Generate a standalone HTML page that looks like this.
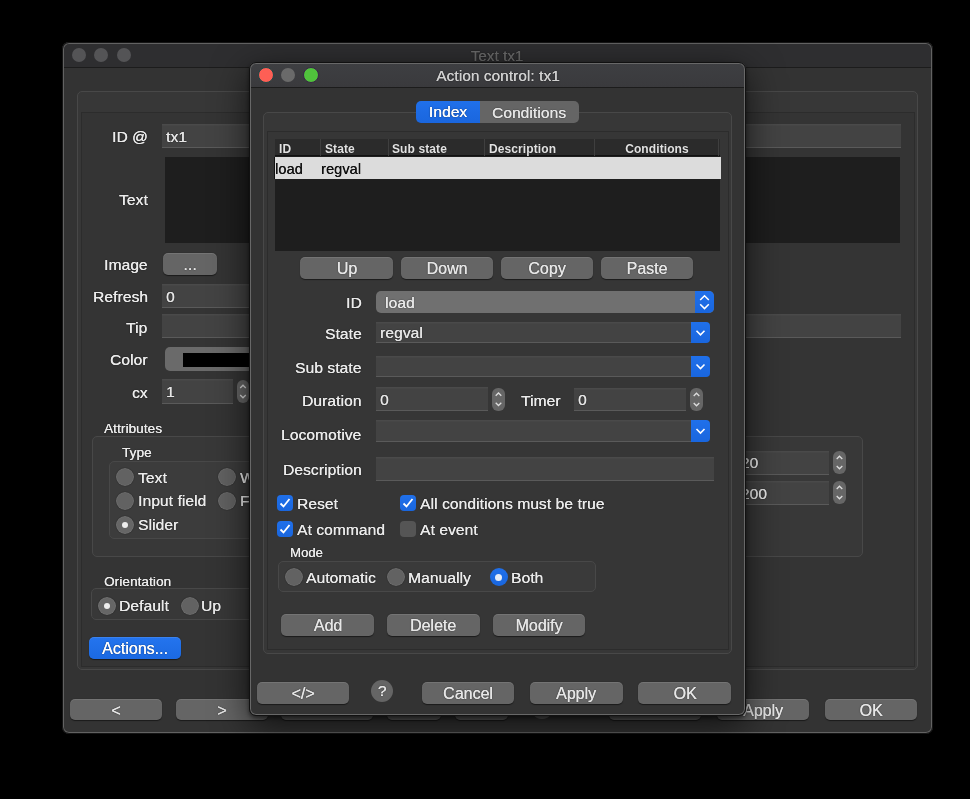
<!DOCTYPE html><html><head><meta charset="utf-8"><style>
html,body{margin:0;padding:0;background:#000;width:970px;height:799px;overflow:hidden}
.a{position:absolute;box-sizing:border-box}
.t{white-space:nowrap;font-family:"Liberation Sans",sans-serif;color:#ebebeb;font-size:15.5px;letter-spacing:0.1px;will-change:transform;text-shadow:0.25px 0 currentColor,0 0 1.2px rgba(0,0,0,.9)}
</style></head><body>
<div class="a " style="left:62px;top:42px;width:871px;height:692px;background:#333;border-radius:7px"></div>
<div class="a " style="left:62px;top:42px;width:871px;height:25.5px;background:#2e2e30;border-radius:7px 7px 0 0;border-bottom:1px solid #1c1c1c"></div>
<div class="a " style="left:71.5px;top:47.7px;width:14.0px;height:14.0px;background:#545456;border-radius:50%"></div>
<div class="a " style="left:94px;top:47.7px;width:14px;height:14.0px;background:#545456;border-radius:50%"></div>
<div class="a " style="left:116.5px;top:47.7px;width:14.0px;height:14.0px;background:#545456;border-radius:50%"></div>
<div class="a t" style="left:346.5px;width:300px;top:45.5px;height:20px;line-height:20px;text-align:center;font-size:15px;color:#6a6a6a">Text tx1</div>
<div class="a " style="left:76.5px;top:90.8px;width:841.5px;height:579.7px;border:1px solid #484848;border-radius:5px;background:rgba(255,255,255,0.025);box-sizing:border-box;"></div>
<div class="a " style="left:80.5px;top:111.5px;width:834.0px;height:555.0px;border:1px solid #2c2c2c;background:#343434"></div>
<div class="a t" style="right:822.5px;top:126.5px;height:20px;line-height:20px;text-align:right;">ID @</div>
<div class="a " style="left:162px;top:124px;width:739px;height:24px;background:#434343;border-bottom:1.5px solid #5a5a5a;box-shadow:inset 0 1.5px 0 #4a4a4a;box-sizing:border-box;"></div>
<div class="a t" style="left:166px;top:126.5px;height:20px;line-height:20px;font-size:15.5px;color:#e6e6e6">tx1</div>
<div class="a t" style="right:822.5px;top:189.5px;height:20px;line-height:20px;text-align:right;">Text</div>
<div class="a " style="left:164.5px;top:156.5px;width:735.0px;height:86.0px;background:#1e1e1e"></div>
<div class="a t" style="right:822.5px;top:254.5px;height:20px;line-height:20px;text-align:right;">Image</div>
<div class="a " style="left:163px;top:253px;width:54px;height:21.5px;background:#656565;border-radius:5px;box-shadow:0 0.5px 1px rgba(0,0,0,.5),inset 0 1px 0 rgba(255,255,255,.1);"></div>
<div class="a t" style="left:40.0px;width:300px;top:254.75px;height:20px;line-height:20px;text-align:center;font-size:16px;letter-spacing:0;color:#e6e6e6">...</div>
<div class="a t" style="right:822.5px;top:286.5px;height:20px;line-height:20px;text-align:right;">Refresh</div>
<div class="a " style="left:162px;top:284px;width:578px;height:24px;background:#434343;border-bottom:1.5px solid #5a5a5a;box-shadow:inset 0 1.5px 0 #4a4a4a;box-sizing:border-box;"></div>
<div class="a t" style="left:166px;top:286.5px;height:20px;line-height:20px;font-size:15.5px;color:#e6e6e6">0</div>
<div class="a t" style="right:822.5px;top:317.5px;height:20px;line-height:20px;text-align:right;">Tip</div>
<div class="a " style="left:162px;top:314px;width:739px;height:24px;background:#434343;border-bottom:1.5px solid #5a5a5a;box-shadow:inset 0 1.5px 0 #4a4a4a;box-sizing:border-box;"></div>
<div class="a t" style="right:822.5px;top:349.5px;height:20px;line-height:20px;text-align:right;">Color</div>
<div class="a " style="left:165px;top:347px;width:575px;height:23.5px;background:#6a6a6a;border-radius:5px"></div>
<div class="a " style="left:183px;top:352.5px;width:557px;height:14.0px;background:#000"></div>
<div class="a t" style="right:822.5px;top:382.5px;height:20px;line-height:20px;text-align:right;">cx</div>
<div class="a " style="left:162px;top:379px;width:71px;height:25px;background:#434343;border-bottom:1.5px solid #5a5a5a;box-shadow:inset 0 1.5px 0 #4a4a4a;box-sizing:border-box;"></div>
<div class="a t" style="left:166px;top:382.0px;height:20px;line-height:20px;font-size:15.5px;color:#e6e6e6">1</div>
<div class="a " style="left:237px;top:380px;width:12px;height:23px;background:#666;border-radius:6px"><svg width="12" height="23" style="position:absolute;left:0;top:0"><path d="M3.2,8.0 l2.8,-2.8 l2.8,2.8 M3.2,15.0 l2.8,2.8 l2.8,-2.8" stroke="#ddd" stroke-width="1.3" fill="none"/></svg></div>
<div class="a t" style="left:103.5px;top:418.5px;height:20px;line-height:20px;font-size:13.5px">Attributes</div>
<div class="a " style="left:91.5px;top:435.5px;width:771.0px;height:121.5px;border:1px solid #484848;border-radius:5px;background:rgba(255,255,255,0.025);box-sizing:border-box;"></div>
<div class="a t" style="left:122px;top:443.0px;height:20px;line-height:20px;font-size:13.5px">Type</div>
<div class="a " style="left:109px;top:460.5px;width:591px;height:78.5px;border:1px solid #484848;border-radius:5px;background:rgba(255,255,255,0.025);box-sizing:border-box;"></div>
<div class="a " style="left:115.8px;top:468.0px;width:18.000000000000014px;height:18.0px;background:#626262;border-radius:50%;box-shadow:inset 0 0 0 1px rgba(255,255,255,.07),0 0 1px rgba(0,0,0,.8)"></div>
<div class="a t" style="left:138px;top:467.5px;height:20px;line-height:20px;">Text</div>
<div class="a " style="left:115.8px;top:491.5px;width:18.000000000000014px;height:18.0px;background:#626262;border-radius:50%;box-shadow:inset 0 0 0 1px rgba(255,255,255,.07),0 0 1px rgba(0,0,0,.8)"></div>
<div class="a t" style="left:138px;top:491.0px;height:20px;line-height:20px;">Input field</div>
<div class="a " style="left:115.8px;top:515.5px;width:18.000000000000014px;height:18.0px;background:#666;border-radius:50%;box-shadow:inset 0 0 0 1px rgba(255,255,255,.07),0 0 1px rgba(0,0,0,.8)"><div class="a" style="left:6.0px;top:6.0px;width:6px;height:6px;border-radius:50%;background:#eee"></div></div>
<div class="a t" style="left:138px;top:515.0px;height:20px;line-height:20px;">Slider</div>
<div class="a " style="left:218.0px;top:468.0px;width:18.0px;height:18.0px;background:#626262;border-radius:50%;box-shadow:inset 0 0 0 1px rgba(255,255,255,.07),0 0 1px rgba(0,0,0,.8)"></div>
<div class="a t" style="left:239.5px;top:467.5px;height:20px;line-height:20px;">Wrap</div>
<div class="a " style="left:218.0px;top:491.5px;width:18.0px;height:18.0px;background:#626262;border-radius:50%;box-shadow:inset 0 0 0 1px rgba(255,255,255,.07),0 0 1px rgba(0,0,0,.8)"></div>
<div class="a t" style="left:239.5px;top:491.0px;height:20px;line-height:20px;">Fast</div>
<div class="a " style="left:700px;top:450.5px;width:129px;height:24.0px;background:#434343;border-bottom:1.5px solid #5a5a5a;box-shadow:inset 0 1.5px 0 #4a4a4a;box-sizing:border-box;"></div>
<div class="a t" style="left:732px;top:453.0px;height:20px;line-height:20px;">120</div>
<div class="a " style="left:833px;top:451px;width:13px;height:23px;background:#666;border-radius:6px"><svg width="13" height="23" style="position:absolute;left:0;top:0"><path d="M3.7,8.0 l2.8,-2.8 l2.8,2.8 M3.7,15.0 l2.8,2.8 l2.8,-2.8" stroke="#ddd" stroke-width="1.3" fill="none"/></svg></div>
<div class="a " style="left:700px;top:481px;width:129px;height:24px;background:#434343;border-bottom:1.5px solid #5a5a5a;box-shadow:inset 0 1.5px 0 #4a4a4a;box-sizing:border-box;"></div>
<div class="a t" style="left:732px;top:483.5px;height:20px;line-height:20px;">1200</div>
<div class="a " style="left:833px;top:481px;width:13px;height:23px;background:#666;border-radius:6px"><svg width="13" height="23" style="position:absolute;left:0;top:0"><path d="M3.7,8.0 l2.8,-2.8 l2.8,2.8 M3.7,15.0 l2.8,2.8 l2.8,-2.8" stroke="#ddd" stroke-width="1.3" fill="none"/></svg></div>
<div class="a t" style="left:103.5px;top:571.5px;height:20px;line-height:20px;font-size:13.5px">Orientation</div>
<div class="a " style="left:91px;top:588px;width:609px;height:32px;border:1px solid #484848;border-radius:5px;background:rgba(255,255,255,0.025);box-sizing:border-box;"></div>
<div class="a " style="left:97.8px;top:596.5px;width:18.0px;height:18.0px;background:#666;border-radius:50%;box-shadow:inset 0 0 0 1px rgba(255,255,255,.07),0 0 1px rgba(0,0,0,.8)"><div class="a" style="left:6.0px;top:6.0px;width:6px;height:6px;border-radius:50%;background:#eee"></div></div>
<div class="a t" style="left:119px;top:596.0px;height:20px;line-height:20px;">Default</div>
<div class="a " style="left:181.0px;top:596.5px;width:18.0px;height:18.0px;background:#626262;border-radius:50%;box-shadow:inset 0 0 0 1px rgba(255,255,255,.07),0 0 1px rgba(0,0,0,.8)"></div>
<div class="a t" style="left:201.3px;top:596.0px;height:20px;line-height:20px;">Up</div>
<div class="a " style="left:89px;top:637px;width:92px;height:21.5px;background:linear-gradient(#2474ee,#1b69e2);border-radius:5px;box-shadow:0 0.5px 1px rgba(0,0,0,.5),inset 0 1px 0 rgba(255,255,255,.1);"></div>
<div class="a t" style="left:-15.0px;width:300px;top:638.75px;height:20px;line-height:20px;text-align:center;font-size:16px;letter-spacing:0;color:#fff">Actions...</div>
<div class="a " style="left:70px;top:699px;width:92px;height:21px;background:#656565;border-radius:5px;box-shadow:0 0.5px 1px rgba(0,0,0,.5),inset 0 1px 0 rgba(255,255,255,.1);"></div>
<div class="a t" style="left:-34.0px;width:300px;top:700.5px;height:20px;line-height:20px;text-align:center;font-size:16px;letter-spacing:0;color:#e6e6e6">&lt;</div>
<div class="a " style="left:175.5px;top:699px;width:92.5px;height:21px;background:#656565;border-radius:5px;box-shadow:0 0.5px 1px rgba(0,0,0,.5),inset 0 1px 0 rgba(255,255,255,.1);"></div>
<div class="a t" style="left:71.75px;width:300px;top:700.5px;height:20px;line-height:20px;text-align:center;font-size:16px;letter-spacing:0;color:#e6e6e6">&gt;</div>
<div class="a " style="left:281px;top:699px;width:92px;height:21px;background:#656565;border-radius:5px;box-shadow:0 0.5px 1px rgba(0,0,0,.5),inset 0 1px 0 rgba(255,255,255,.1);"></div>
<div class="a t" style="left:177.0px;width:300px;top:700.5px;height:20px;line-height:20px;text-align:center;font-size:16px;letter-spacing:0;color:#e6e6e6"></div>
<div class="a " style="left:387px;top:699px;width:54px;height:21px;background:#656565;border-radius:5px;box-shadow:0 0.5px 1px rgba(0,0,0,.5),inset 0 1px 0 rgba(255,255,255,.1);"></div>
<div class="a t" style="left:264.0px;width:300px;top:700.5px;height:20px;line-height:20px;text-align:center;font-size:16px;letter-spacing:0;color:#e6e6e6"></div>
<div class="a " style="left:455px;top:699px;width:53px;height:21px;background:#656565;border-radius:5px;box-shadow:0 0.5px 1px rgba(0,0,0,.5),inset 0 1px 0 rgba(255,255,255,.1);"></div>
<div class="a t" style="left:331.5px;width:300px;top:700.5px;height:20px;line-height:20px;text-align:center;font-size:16px;letter-spacing:0;color:#e6e6e6"></div>
<div class="a " style="left:609px;top:699px;width:92px;height:21px;background:#656565;border-radius:5px;box-shadow:0 0.5px 1px rgba(0,0,0,.5),inset 0 1px 0 rgba(255,255,255,.1);"></div>
<div class="a t" style="left:505.0px;width:300px;top:700.5px;height:20px;line-height:20px;text-align:center;font-size:16px;letter-spacing:0;color:#e6e6e6"></div>
<div class="a " style="left:717px;top:699px;width:92px;height:21px;background:#656565;border-radius:5px;box-shadow:0 0.5px 1px rgba(0,0,0,.5),inset 0 1px 0 rgba(255,255,255,.1);"></div>
<div class="a t" style="left:613.0px;width:300px;top:700.5px;height:20px;line-height:20px;text-align:center;font-size:16px;letter-spacing:0;color:#e6e6e6">Apply</div>
<div class="a " style="left:825px;top:699px;width:92px;height:21px;background:#656565;border-radius:5px;box-shadow:0 0.5px 1px rgba(0,0,0,.5),inset 0 1px 0 rgba(255,255,255,.1);"></div>
<div class="a t" style="left:721.0px;width:300px;top:700.5px;height:20px;line-height:20px;text-align:center;font-size:16px;letter-spacing:0;color:#e6e6e6">OK</div>
<div class="a " style="left:530.8px;top:696.6px;width:22.0px;height:22.0px;background:#656565;border-radius:50%"></div>
<div class="a " style="left:62px;top:42px;width:871px;height:692px;border-radius:7px;border:1px solid #151515;box-shadow:inset 0 0 0 1px #626262"></div>
<div class="a " style="left:249px;top:62px;width:497px;height:654px;background:#333;border-radius:7px;box-shadow:0 10px 36px rgba(0,0,0,.68),0 2px 4px rgba(0,0,0,.5)"></div>
<div class="a " style="left:249px;top:62px;width:497px;height:26px;background:linear-gradient(#3e3f42,#3a3a3d);border-radius:7px 7px 0 0;border-bottom:1px solid #1c1c1c"></div>
<div class="a " style="left:257.6px;top:67.2px;width:16.0px;height:16.0px;background:#fe5f55;border-radius:50%;border:1.2px solid #1d4646"></div>
<div class="a " style="left:281px;top:68.2px;width:14px;height:14.0px;background:#6a6a6a;border-radius:50%"></div>
<div class="a " style="left:302.6px;top:67.2px;width:16.0px;height:16.0px;background:#50c23c;border-radius:50%;border:1.2px solid #3a2448"></div>
<div class="a t" style="left:347.5px;width:300px;top:66.0px;height:20px;line-height:20px;text-align:center;font-size:15.3px;color:#d0d0d0">Action control: tx1</div>
<div class="a " style="left:263px;top:112px;width:468.5px;height:542px;border:1px solid #484848;border-radius:5px;background:rgba(255,255,255,0.025);box-sizing:border-box;"></div>
<div class="a " style="left:267px;top:130.5px;width:461.5px;height:519.0px;border:1px solid #2c2c2c;background:#363636"></div>
<div class="a " style="left:416px;top:101.3px;width:63.5px;height:21.299999999999997px;background:linear-gradient(#2070ea,#1a66de);border-radius:5px 0 0 5px"></div>
<div class="a " style="left:479.5px;top:101.3px;width:99.0px;height:21.299999999999997px;background:#656565;border-radius:0 5px 5px 0"></div>
<div class="a t" style="left:298px;width:300px;top:101.5px;height:20px;line-height:20px;text-align:center;font-size:15.5px;color:#fff">Index</div>
<div class="a t" style="left:379px;width:300px;top:102.5px;height:20px;line-height:20px;text-align:center;font-size:15.5px;color:#e6e6e6">Conditions</div>
<div class="a " style="left:275px;top:138.5px;width:445px;height:112.0px;background:#1e1e1e"></div>
<div class="a " style="left:275px;top:138.5px;width:445px;height:17.5px;background:#2b2b2b;border-bottom:1px solid #111"></div>
<div class="a " style="left:320px;top:139px;width:1px;height:17px;background:#3f3f3f"></div>
<div class="a " style="left:387.5px;top:139px;width:1.0px;height:17px;background:#3f3f3f"></div>
<div class="a " style="left:484px;top:139px;width:1px;height:17px;background:#3f3f3f"></div>
<div class="a " style="left:594px;top:139px;width:1px;height:17px;background:#3f3f3f"></div>
<div class="a " style="left:718px;top:139px;width:1px;height:17px;background:#3f3f3f"></div>
<div class="a t" style="left:278.5px;top:139.0px;height:20px;line-height:20px;font-size:12px;font-weight:bold;color:#e2e2e2;text-shadow:0 0 1px rgba(0,0,0,.9)">ID</div>
<div class="a t" style="left:324.5px;top:139.0px;height:20px;line-height:20px;font-size:12px;font-weight:bold;color:#e2e2e2;text-shadow:0 0 1px rgba(0,0,0,.9)">State</div>
<div class="a t" style="left:392px;top:139.0px;height:20px;line-height:20px;font-size:12px;font-weight:bold;color:#e2e2e2;text-shadow:0 0 1px rgba(0,0,0,.9)">Sub state</div>
<div class="a t" style="left:489px;top:139.0px;height:20px;line-height:20px;font-size:12px;font-weight:bold;color:#e2e2e2;text-shadow:0 0 1px rgba(0,0,0,.9)">Description</div>
<div class="a t" style="left:507px;width:300px;top:139.0px;height:20px;line-height:20px;text-align:center;font-size:12px;font-weight:bold;color:#e2e2e2;text-shadow:0 0 1px rgba(0,0,0,.9)">Conditions</div>
<div class="a " style="left:274px;top:157px;width:446.5px;height:22px;background:#dcdcdc;border-left:1px solid #111"></div>
<div class="a t" style="left:275px;top:158.5px;height:20px;line-height:20px;font-size:14.5px;color:#111;text-shadow:0.2px 0 currentColor">load</div>
<div class="a t" style="left:321px;top:158.5px;height:20px;line-height:20px;font-size:14.5px;color:#111;text-shadow:0.2px 0 currentColor">regval</div>
<div class="a " style="left:300px;top:257px;width:93px;height:22px;background:#656565;border-radius:5px;box-shadow:0 0.5px 1px rgba(0,0,0,.5),inset 0 1px 0 rgba(255,255,255,.1);"></div>
<div class="a t" style="left:196.5px;width:300px;top:259.0px;height:20px;line-height:20px;text-align:center;font-size:16px;letter-spacing:0;color:#e6e6e6">Up</div>
<div class="a " style="left:400.5px;top:257px;width:92.5px;height:22px;background:#656565;border-radius:5px;box-shadow:0 0.5px 1px rgba(0,0,0,.5),inset 0 1px 0 rgba(255,255,255,.1);"></div>
<div class="a t" style="left:296.75px;width:300px;top:259.0px;height:20px;line-height:20px;text-align:center;font-size:16px;letter-spacing:0;color:#e6e6e6">Down</div>
<div class="a " style="left:500.5px;top:257px;width:92.5px;height:22px;background:#656565;border-radius:5px;box-shadow:0 0.5px 1px rgba(0,0,0,.5),inset 0 1px 0 rgba(255,255,255,.1);"></div>
<div class="a t" style="left:396.75px;width:300px;top:259.0px;height:20px;line-height:20px;text-align:center;font-size:16px;letter-spacing:0;color:#e6e6e6">Copy</div>
<div class="a " style="left:601px;top:257px;width:92px;height:22px;background:#656565;border-radius:5px;box-shadow:0 0.5px 1px rgba(0,0,0,.5),inset 0 1px 0 rgba(255,255,255,.1);"></div>
<div class="a t" style="left:497.0px;width:300px;top:259.0px;height:20px;line-height:20px;text-align:center;font-size:16px;letter-spacing:0;color:#e6e6e6">Paste</div>
<div class="a t" style="right:608.5px;top:292.5px;height:20px;line-height:20px;text-align:right;">ID</div>
<div class="a " style="left:375.5px;top:291px;width:338.5px;height:22px;background:#707070;border-radius:5px;overflow:hidden"></div>
<div class="a " style="left:695px;top:291px;width:19px;height:22px;background:linear-gradient(#2070ea,#1966de);border-radius:0 5px 5px 0"><svg width="19" height="22" style="position:absolute;left:0;top:0"><path d="M5.2,9.0 l4.3,-4.3 l4.3,4.3 M5.2,13.3 l4.3,4.3 l4.3,-4.3" stroke="#fff" stroke-width="1.5" fill="none"/></svg></div>
<div class="a t" style="left:384.5px;top:292.5px;height:20px;line-height:20px;font-size:15.5px;color:#e8e8e8">load</div>
<div class="a t" style="right:608.5px;top:323.5px;height:20px;line-height:20px;text-align:right;">State</div>
<div class="a " style="left:376px;top:321.5px;width:315px;height:21.5px;background:#434343;border-bottom:1.5px solid #5a5a5a;box-shadow:inset 0 1.5px 0 #4a4a4a;box-sizing:border-box"></div>
<div class="a " style="left:691px;top:321.5px;width:19px;height:21.5px;background:linear-gradient(#2070ea,#1966de);border-radius:0 4px 4px 0"><svg width="19" height="21.5" style="position:absolute;left:0;top:0"><path d="M5.5,8.75 l4,4 l4,-4" stroke="#fff" stroke-width="1.6" fill="none"/></svg></div>
<div class="a t" style="left:380px;top:322.75px;height:20px;line-height:20px;font-size:15.5px;color:#e6e6e6">regval</div>
<div class="a t" style="right:608.5px;top:357.5px;height:20px;line-height:20px;text-align:right;">Sub state</div>
<div class="a " style="left:376px;top:355.5px;width:315px;height:21.0px;background:#434343;border-bottom:1.5px solid #5a5a5a;box-shadow:inset 0 1.5px 0 #4a4a4a;box-sizing:border-box"></div>
<div class="a " style="left:691px;top:355.5px;width:19px;height:21.0px;background:linear-gradient(#2070ea,#1966de);border-radius:0 4px 4px 0"><svg width="19" height="21.0" style="position:absolute;left:0;top:0"><path d="M5.5,8.5 l4,4 l4,-4" stroke="#fff" stroke-width="1.6" fill="none"/></svg></div>
<div class="a t" style="right:608.5px;top:390.5px;height:20px;line-height:20px;text-align:right;">Duration</div>
<div class="a " style="left:376px;top:387.3px;width:112px;height:24.0px;background:#434343;border-bottom:1.5px solid #5a5a5a;box-shadow:inset 0 1.5px 0 #4a4a4a;box-sizing:border-box;"></div>
<div class="a t" style="left:380px;top:389.8px;height:20px;line-height:20px;font-size:15.5px;color:#e6e6e6">0</div>
<div class="a " style="left:492px;top:388px;width:13px;height:22.5px;background:#666;border-radius:6px"><svg width="13" height="22.5" style="position:absolute;left:0;top:0"><path d="M3.7,7.75 l2.8,-2.8 l2.8,2.8 M3.7,14.75 l2.8,2.8 l2.8,-2.8" stroke="#ddd" stroke-width="1.3" fill="none"/></svg></div>
<div class="a t" style="left:521px;top:390.5px;height:20px;line-height:20px;">Timer</div>
<div class="a " style="left:574px;top:387.7px;width:112px;height:23.69999999999999px;background:#434343;border-bottom:1.5px solid #5a5a5a;box-shadow:inset 0 1.5px 0 #4a4a4a;box-sizing:border-box;"></div>
<div class="a t" style="left:578px;top:390.04999999999995px;height:20px;line-height:20px;font-size:15.5px;color:#e6e6e6">0</div>
<div class="a " style="left:690px;top:388px;width:13px;height:23px;background:#666;border-radius:6px"><svg width="13" height="23" style="position:absolute;left:0;top:0"><path d="M3.7,8.0 l2.8,-2.8 l2.8,2.8 M3.7,15.0 l2.8,2.8 l2.8,-2.8" stroke="#ddd" stroke-width="1.3" fill="none"/></svg></div>
<div class="a t" style="right:608.5px;top:424.5px;height:20px;line-height:20px;text-align:right;">Locomotive</div>
<div class="a " style="left:376px;top:419.5px;width:315px;height:22.0px;background:#434343;border-bottom:1.5px solid #5a5a5a;box-shadow:inset 0 1.5px 0 #4a4a4a;box-sizing:border-box"></div>
<div class="a " style="left:691px;top:419.5px;width:19px;height:22.0px;background:linear-gradient(#2070ea,#1966de);border-radius:0 4px 4px 0"><svg width="19" height="22.0" style="position:absolute;left:0;top:0"><path d="M5.5,9.0 l4,4 l4,-4" stroke="#fff" stroke-width="1.6" fill="none"/></svg></div>
<div class="a t" style="right:608.5px;top:460.0px;height:20px;line-height:20px;text-align:right;">Description</div>
<div class="a " style="left:376px;top:457px;width:338px;height:24px;background:#434343;border-bottom:1.5px solid #5a5a5a;box-shadow:inset 0 1.5px 0 #4a4a4a;box-sizing:border-box;"></div>
<div class="a " style="left:277px;top:495px;width:16px;height:16px;background:linear-gradient(#2070ea,#1966de);border-radius:4px"><svg width="16" height="16" style="position:absolute;left:0;top:0"><path d="M3.5,8.5 L6.5,11.5 L12.5,4" stroke="#fff" stroke-width="1.8" fill="none"/></svg></div>
<div class="a t" style="left:296.8px;top:493.5px;height:20px;line-height:20px;">Reset</div>
<div class="a " style="left:399.5px;top:495px;width:16.0px;height:16px;background:linear-gradient(#2070ea,#1966de);border-radius:4px"><svg width="16" height="16" style="position:absolute;left:0;top:0"><path d="M3.5,8.5 L6.5,11.5 L12.5,4" stroke="#fff" stroke-width="1.8" fill="none"/></svg></div>
<div class="a t" style="left:420px;top:493.5px;height:20px;line-height:20px;">All conditions must be true</div>
<div class="a " style="left:277px;top:521px;width:16px;height:16px;background:linear-gradient(#2070ea,#1966de);border-radius:4px"><svg width="16" height="16" style="position:absolute;left:0;top:0"><path d="M3.5,8.5 L6.5,11.5 L12.5,4" stroke="#fff" stroke-width="1.8" fill="none"/></svg></div>
<div class="a t" style="left:296.8px;top:519.5px;height:20px;line-height:20px;">At command</div>
<div class="a " style="left:399.5px;top:521px;width:16.0px;height:16px;background:#555;border-radius:4px"></div>
<div class="a t" style="left:420px;top:519.5px;height:20px;line-height:20px;">At event</div>
<div class="a t" style="left:289.8px;top:542.8px;height:20px;line-height:20px;font-size:13px">Mode</div>
<div class="a " style="left:278px;top:560.5px;width:318px;height:31.5px;border:1px solid #484848;border-radius:5px;background:rgba(255,255,255,0.025);box-sizing:border-box;"></div>
<div class="a " style="left:284.5px;top:568.0px;width:18.0px;height:18.0px;background:#626262;border-radius:50%;box-shadow:inset 0 0 0 1px rgba(255,255,255,.07),0 0 1px rgba(0,0,0,.8)"></div>
<div class="a t" style="left:305.8px;top:567.5px;height:20px;line-height:20px;">Automatic</div>
<div class="a " style="left:387.0px;top:568.0px;width:18.0px;height:18.0px;background:#626262;border-radius:50%;box-shadow:inset 0 0 0 1px rgba(255,255,255,.07),0 0 1px rgba(0,0,0,.8)"></div>
<div class="a t" style="left:407.5px;top:567.5px;height:20px;line-height:20px;">Manually</div>
<div class="a " style="left:489.6px;top:568.3px;width:18.0px;height:18.0px;background:linear-gradient(#2070ea,#1966de);border-radius:50%"><div class="a" style="left:5.5px;top:5.5px;width:7px;height:7px;border-radius:50%;background:#e4ecf8"></div></div>
<div class="a t" style="left:510.8px;top:567.5px;height:20px;line-height:20px;">Both</div>
<div class="a " style="left:281px;top:614px;width:93px;height:22px;background:#656565;border-radius:5px;box-shadow:0 0.5px 1px rgba(0,0,0,.5),inset 0 1px 0 rgba(255,255,255,.1);"></div>
<div class="a t" style="left:177.5px;width:300px;top:616.0px;height:20px;line-height:20px;text-align:center;font-size:16px;letter-spacing:0;color:#e6e6e6">Add</div>
<div class="a " style="left:387px;top:614px;width:92.5px;height:22px;background:#656565;border-radius:5px;box-shadow:0 0.5px 1px rgba(0,0,0,.5),inset 0 1px 0 rgba(255,255,255,.1);"></div>
<div class="a t" style="left:283.25px;width:300px;top:616.0px;height:20px;line-height:20px;text-align:center;font-size:16px;letter-spacing:0;color:#e6e6e6">Delete</div>
<div class="a " style="left:493px;top:614px;width:92px;height:22px;background:#656565;border-radius:5px;box-shadow:0 0.5px 1px rgba(0,0,0,.5),inset 0 1px 0 rgba(255,255,255,.1);"></div>
<div class="a t" style="left:389.0px;width:300px;top:616.0px;height:20px;line-height:20px;text-align:center;font-size:16px;letter-spacing:0;color:#e6e6e6">Modify</div>
<div class="a " style="left:256.5px;top:682px;width:92.5px;height:22px;background:#656565;border-radius:5px;box-shadow:0 0.5px 1px rgba(0,0,0,.5),inset 0 1px 0 rgba(255,255,255,.1);"></div>
<div class="a t" style="left:152.75px;width:300px;top:684.0px;height:20px;line-height:20px;text-align:center;font-size:16px;letter-spacing:0;color:#e6e6e6">&lt;/&gt;</div>
<div class="a " style="left:422px;top:682px;width:92px;height:22px;background:#656565;border-radius:5px;box-shadow:0 0.5px 1px rgba(0,0,0,.5),inset 0 1px 0 rgba(255,255,255,.1);"></div>
<div class="a t" style="left:318.0px;width:300px;top:684.0px;height:20px;line-height:20px;text-align:center;font-size:16px;letter-spacing:0;color:#e6e6e6">Cancel</div>
<div class="a " style="left:530px;top:682px;width:92.5px;height:22px;background:#656565;border-radius:5px;box-shadow:0 0.5px 1px rgba(0,0,0,.5),inset 0 1px 0 rgba(255,255,255,.1);"></div>
<div class="a t" style="left:426.25px;width:300px;top:684.0px;height:20px;line-height:20px;text-align:center;font-size:16px;letter-spacing:0;color:#e6e6e6">Apply</div>
<div class="a " style="left:638px;top:682px;width:93px;height:22px;background:#656565;border-radius:5px;box-shadow:0 0.5px 1px rgba(0,0,0,.5),inset 0 1px 0 rgba(255,255,255,.1);"></div>
<div class="a t" style="left:534.5px;width:300px;top:684.0px;height:20px;line-height:20px;text-align:center;font-size:16px;letter-spacing:0;color:#e6e6e6">OK</div>
<div class="a " style="left:371px;top:679.5px;width:22px;height:22.0px;background:#656565;border-radius:50%"></div>
<div class="a t" style="left:232px;width:300px;top:681.0px;height:20px;line-height:20px;text-align:center;font-size:15.5px;color:#e6e6e6">?</div>
<div class="a " style="left:249px;top:62px;width:497px;height:654px;border-radius:7px;border:1px solid #111;box-shadow:inset 0 0 0 1px #686868"></div>
</body></html>
